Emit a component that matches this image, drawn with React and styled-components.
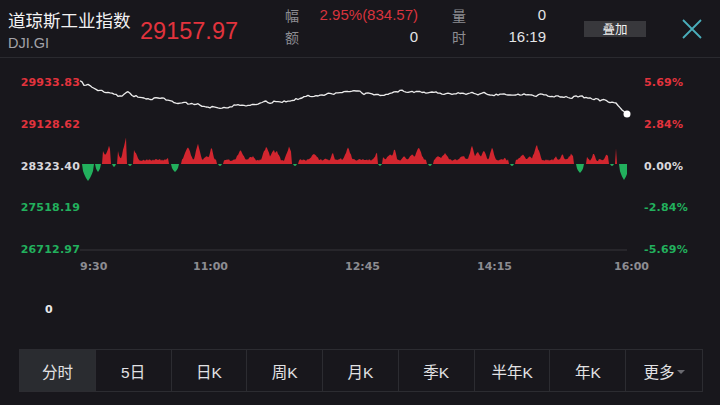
import React from "react";
import styled, { createGlobalStyle } from "styled-components";

const RED = "#e2333d";
const GREEN = "#22b05d";

const GlobalStyle = createGlobalStyle`
  html, body {
    margin: 0;
    padding: 0;
    background: #18171c;
  }
  body {
    font-family: "Liberation Sans", "Noto Sans CJK SC", Arial, sans-serif;
    color: #e6e6e8;
  }
`;

function rng(seed) {
  return () => {
    seed = (seed + 0x6d2b79f5) | 0;
    let t = Math.imul(seed ^ (seed >>> 15), 1 | seed);
    t = (t + Math.imul(t ^ (t >>> 7), 61 | t)) ^ t;
    return ((t ^ (t >>> 14)) >>> 0) / 4294967296;
  };
}

const W = 547;
const TOP = 77;

// price line keypoints, x relative to plot, y absolute on page
const keys = [
  [0, 83], [4, 86], [8, 85], [14, 90], [24, 93], [40, 97], [48, 94], [52, 97],
  [80, 100], [100, 104], [135, 108], [160, 106], [185, 104], [210, 101],
  [240, 95], [270, 93], [300, 96], [320, 92], [370, 94], [420, 95],
  [460, 96], [500, 98], [515, 100], [535, 104], [542, 111], [547, 115],
];

function buildPrice() {
  const r = rng(7);
  const pts = [];
  let n = 0;
  for (let x = 0; x <= W; x += 2) {
    let i = 0;
    while (i < keys.length - 2 && keys[i + 1][0] < x) i++;
    const [x0, y0] = keys[i];
    const [x1, y1] = keys[i + 1];
    const t = Math.min(1, Math.max(0, (x - x0) / (x1 - x0)));
    n = n * 0.5 + (r() - 0.5) * 2.4;
    const y = y0 + (y1 - y0) * t + (x > 540 ? 0 : n);
    pts.push(`${x},${(y - TOP).toFixed(1)}`);
  }
  return pts.join(" ");
}

const dips = [
  [8, 6, 17], [18, 3, 8], [34, 2, 3], [50, 2, 2], [95, 4, 8], [140, 2, 2],
  [215, 2, 2], [300, 1.5, 2], [350, 2, 2], [432, 2, 2], [500, 4, 9],
  [532, 2, 2], [544, 5, 16],
];

function buildVolume() {
  const r = rng(21);
  const peaks = [];
  for (let i = 0; i < 80; i++) {
    peaks.push([r() * W, 3 + r() * 6, 3 + Math.pow(r(), 1.8) * 17]);
  }
  peaks.push([46, 6, 26], [118, 5, 20], [392, 5, 18], [268, 6, 16]);
  const vals = [];
  for (let x = 0; x <= W; x += 1) {
    let v = 3 + r() * 2;
    for (const [c, w, h] of peaks) {
      const k = 1 - Math.abs(x - c) / w;
      if (k > 0) v = Math.max(v, h * k + r() * 1.5);
    }
    for (const [c, w, d] of dips) {
      const k = 1 - Math.abs(x - c) / w;
      if (k > -0.6) v = k > 0 ? -d * Math.sqrt(k) : 0;
    }
    vals.push(v);
  }
  const base = 165 - TOP;
  const up = [`0,${base}`];
  const down = [`0,${base}`];
  vals.forEach((v, x) => {
    up.push(`${x},${(base - Math.max(0, v)).toFixed(1)}`);
    down.push(`${x},${(base - Math.min(0, v)).toFixed(1)}`);
  });
  up.push(`${W},${base}`);
  down.push(`${W},${base}`);
  return { up: up.join(" "), down: down.join(" ") };
}

const pricePts = buildPrice();
const vol = buildVolume();

const leftLabels = [
  ["29933.83", RED],
  ["29128.62", RED],
  ["28323.40", "#d8d8dc"],
  ["27518.19", GREEN],
  ["26712.97", GREEN],
];
const rightLabels = [
  ["5.69%", RED],
  ["2.84%", RED],
  ["0.00%", "#d8d8dc"],
  ["-2.84%", GREEN],
  ["-5.69%", GREEN],
];
const times = ["9:30", "11:00", "12:45", "14:15", "16:00"];
const tabs = ["分时", "5日", "日K", "周K", "月K", "季K", "半年K", "年K", "更多"];

export default function App() {
  return (
    <Page>
      <GlobalStyle />
      <Header>
        <TitleBlock>
          <Title>道琼斯工业指数</Title>
          <Code>DJI.GI</Code>
        </TitleBlock>
        <Price>29157.97</Price>
        <Stats>
          <StatGroup $width={133}>
            <StatLabel>幅</StatLabel>
            <StatValue $red>2.95%(834.57)</StatValue>
            <StatLabel>额</StatLabel>
            <StatValue>0</StatValue>
          </StatGroup>
          <StatGroup $width={94}>
            <StatLabel>量</StatLabel>
            <StatValue>0</StatValue>
            <StatLabel>时</StatLabel>
            <StatValue>16:19</StatValue>
          </StatGroup>
        </Stats>
        <OverlayButton>叠加</OverlayButton>
        <CloseButton aria-label="close">
          <svg width="22" height="22" viewBox="0 0 22 22">
            <path d="M2 2 L20 20 M20 2 L2 20" stroke="#4aaebb" strokeWidth="1.8" fill="none" />
          </svg>
        </CloseButton>
      </Header>

      <ChartRow>
        <Axis $align="right">
          {leftLabels.map(([t, c]) => (
            <AxisLabel key={t} $color={c}>{t}</AxisLabel>
          ))}
        </Axis>
        <Plot width={W} height={181} viewBox={`0 0 ${W} 181`}>
          <line x1="0" y1={251 - TOP} x2={W} y2={251 - TOP} stroke="#2c2c31" strokeWidth="1.5" />
          <polygon points={vol.up} fill="#d2262f" />
          <polygon points={vol.down} fill={GREEN} />
          <polyline points={pricePts} fill="none" stroke="#ececec" strokeWidth="1.3" strokeLinejoin="round" />
          <circle cx={W} cy={115 - TOP} r="3.5" fill="#ffffff" />
        </Plot>
        <Axis $align="left">
          {rightLabels.map(([t, c]) => (
            <AxisLabel key={t} $color={c}>{t}</AxisLabel>
          ))}
        </Axis>
      </ChartRow>

      <TimeRow>
        {times.map((t) => (
          <TimeLabel key={t}>{t}</TimeLabel>
        ))}
      </TimeRow>

      <VolumeZero>0</VolumeZero>

      <Tabs>
        {tabs.map((t, i) => (
          <Tab key={t} $active={i === 0}>
            {t}
            {t === "更多" && <Caret />}
          </Tab>
        ))}
      </Tabs>
    </Page>
  );
}

const Page = styled.div`
  width: 720px;
  height: 405px;
  overflow: hidden;
  background: #18171c;
`;

const Header = styled.div`
  display: flex;
  align-items: center;
  height: 58px;
  padding-left: 8px;
  border-bottom: 1px solid #2a2a2f;
  box-sizing: border-box;
`;

const TitleBlock = styled.div`
  width: 132px;
  display: flex;
  flex-direction: column;
  gap: 5px;
  margin-top: 4px;
`;

const Title = styled.div`
  font-family: "Noto Sans CJK SC", sans-serif;
  font-size: 17.5px;
  line-height: 20px;
  color: #f2f2f2;
  white-space: nowrap;
`;

const Code = styled.div`
  font-size: 14.5px;
  line-height: 16px;
  color: #a3a3a8;
`;

const Price = styled.div`
  width: 145px;
  font-family: "Liberation Sans", Arial, sans-serif;
  font-size: 23.5px;
  color: ${RED};
  margin-top: 6px;
`;

const Stats = styled.div`
  display: flex;
  gap: 34px;
  width: 299px;
  margin-top: -6px;
`;

const StatGroup = styled.div`
  display: grid;
  grid-template-columns: auto 1fr;
  row-gap: 4px;
  width: ${(p) => p.$width}px;
`;

const StatLabel = styled.div`
  font-family: "Noto Sans CJK SC", sans-serif;
  font-size: 14px;
  line-height: 18px;
  color: #8d8d92;
`;

const StatValue = styled.div`
  text-align: right;
  font-size: 15px;
  line-height: 18px;
  white-space: nowrap;
  color: ${(p) => (p.$red ? "#d8333d" : "#e4e4e6")};
`;

const OverlayButton = styled.div`
  width: 62px;
  height: 16px;
  background: #38383c;
  color: #f0f0f0;
  font-family: "Noto Sans CJK SC", sans-serif;
  font-size: 12.5px;
  line-height: 16px;
  text-align: center;
`;

const CloseButton = styled.div`
  margin-left: 35px;
  display: flex;
  align-items: center;
`;

const ChartRow = styled.div`
  display: flex;
  margin-top: 18px;
  height: 181px;
`;

const Axis = styled.div`
  width: ${(p) => (p.$align === "right" ? "80px" : "70px")};
  display: flex;
  flex-direction: column;
  justify-content: space-between;
  text-align: ${(p) => p.$align};
  box-sizing: border-box;
  padding-left: ${(p) => (p.$align === "left" ? "17px" : "0")};
`;

const AxisLabel = styled.div`
  font-family: "DejaVu Sans", "Liberation Sans", sans-serif;
  font-weight: bold;
  font-size: 11px;
  line-height: 14px;
  color: ${(p) => p.$color};
  letter-spacing: 0.2px;
`;

const Plot = styled.svg`
  display: block;
  overflow: visible;
`;

const TimeRow = styled.div`
  display: grid;
  grid-template-columns: 113px 152px 132px 137px auto;
  padding-left: 80px;
  margin-top: 3px;
`;

const TimeLabel = styled.div`
  font-family: "DejaVu Sans", "Liberation Sans", sans-serif;
  font-weight: bold;
  font-size: 11px;
  line-height: 14px;
  color: #8c8c91;
`;

const VolumeZero = styled.div`
  margin-top: 29px;
  padding-left: 45px;
  font-family: "DejaVu Sans", sans-serif;
  font-weight: bold;
  font-size: 11px;
  line-height: 14px;
  color: #e8e8ea;
`;

const Tabs = styled.div`
  display: grid;
  grid-template-columns: repeat(9, 1fr);
  margin: 32px 17px 0 19px;
  height: 43px;
  border: 1px solid #2c2c31;
  box-sizing: border-box;
`;

const Tab = styled.div`
  display: flex;
  align-items: center;
  justify-content: center;
  font-family: "Liberation Sans", "Noto Sans CJK SC", sans-serif;
  font-size: 15.5px;
  color: #e2e2e4;
  background: ${(p) => (p.$active ? "#2a2c30" : "transparent")};
  border-right: 1px solid #2c2c31;
  &:last-child {
    border-right: none;
  }
`;

const Caret = styled.span`
  width: 0;
  height: 0;
  margin-left: 2px;
  margin-top: 2px;
  border-left: 4px solid transparent;
  border-right: 4px solid transparent;
  border-top: 4px solid #6a6a70;
`;
